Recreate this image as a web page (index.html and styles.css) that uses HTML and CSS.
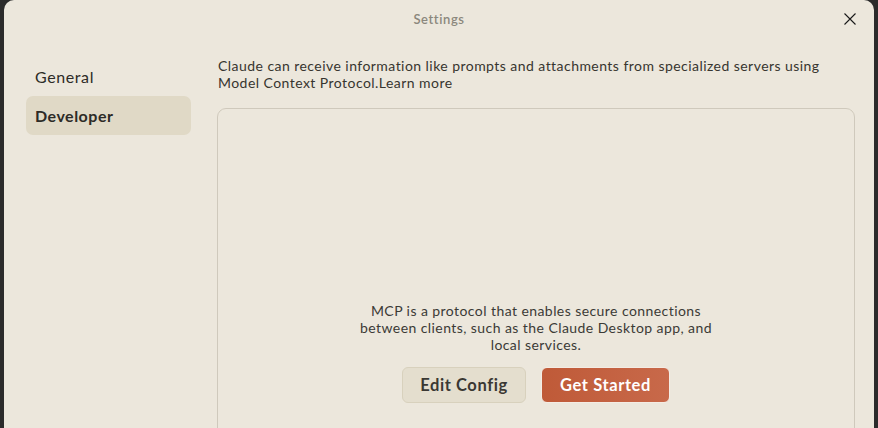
FILE: index.html
```html
<!DOCTYPE html>
<html>
<head>
<meta charset="utf-8">
<link rel="stylesheet" href="styles.css">
</head>
<body>
<div class="window">
  <div class="titlebar">
    <span class="title">Settings</span>
    <button class="close" aria-label="Close">
      <svg width="12" height="12" viewBox="0 0 12 12"><path d="M0.5 0.5 L11.5 11.5 M11.5 0.5 L0.5 11.5" stroke="#1a1a1a" stroke-width="1.1" fill="none"/></svg>
    </button>
  </div>
  <div class="content">
    <nav class="sidebar">
      <div class="nav-item">General</div>
      <div class="nav-item active">Developer</div>
    </nav>
    <main class="main">
      <p class="intro">Claude can receive information like prompts and attachments from specialized servers using Model Context Protocol.Learn more</p>
      <section class="panel">
        <p class="panel-text">MCP is a protocol that enables secure connections between clients, such as the Claude Desktop app, and local services.</p>
        <div class="actions">
          <button class="btn btn-secondary">Edit Config</button>
          <button class="btn btn-primary">Get Started</button>
        </div>
      </section>
    </main>
  </div>
</div>
</body>
</html>
```
FILE: styles.css
```css
* { box-sizing: border-box; }
html, body { margin: 0; padding: 0; height: 100%; overflow: hidden; }
body {
  background: #2b2b2b;
  font-family: "Lato", "Noto Sans", sans-serif;
  color: #2d2b27;
}
.window {
  margin-left: 4px;
  width: 870px;
  height: 428px;
  overflow: hidden;
  background: #ece7dc;
  border-radius: 10px 10px 0 0;
}
.titlebar {
  height: 38px;
  display: flex;
  align-items: center;
  justify-content: center;
  position: relative;
}
.title {
  font-size: 13px;
  font-weight: 600;
  letter-spacing: 0.6px;
  color: #8b877d;
}
.close {
  position: absolute;
  right: 18px;
  top: 13px;
  background: none;
  border: 0;
  padding: 0;
  width: 12px;
  height: 12px;
  display: flex;
}
.content {
  display: flex;
  padding-top: 19px;
}
.sidebar {
  width: 213px;
  padding-left: 22px;
  padding-right: 26px;
  display: flex;
  flex-direction: column;
}
.nav-item {
  height: 39px;
  display: flex;
  align-items: center;
  padding-left: 9px;
  font-size: 16px;
  letter-spacing: 0.6px;
  border-radius: 7px;
  color: #2d2b27;
}
.nav-item.active {
  background: #e0d9c6;
  font-weight: 700;
  letter-spacing: 0.5px;
}
.main {
  flex: 1;
  padding-right: 19px;
}
.intro {
  margin: 0;
  padding-left: 1px;
  font-size: 14px;
  line-height: 17px;
  letter-spacing: 0.45px;
  color: #37352f;
}
.panel {
  margin-top: 17px;
  border: 1px solid #cfc9bc;
  border-radius: 9px;
  height: 400px;
  padding-top: 193px;
  display: flex;
  flex-direction: column;
  align-items: center;
}
.panel-text {
  margin: 0;
  max-width: 360px;
  text-align: center;
  font-size: 14px;
  line-height: 17px;
  letter-spacing: 0.43px;
  color: #3b3a36;
}
.actions {
  display: flex;
  gap: 15px;
  margin-top: 14px;
}
.btn {
  height: 36px;
  font-family: inherit;
  font-size: 16.5px;
  font-weight: 700;
  letter-spacing: 0.6px;
  border-radius: 6px;
  padding: 0;
}
.btn-secondary {
  width: 124px;
  background: #e4dece;
  border: 1px solid #d8d1bd;
  color: #3a3833;
}
.btn-primary {
  width: 129px;
  background: linear-gradient(90deg, #bf5a38, #c8694a);
  border: 1px solid #f4ece4;
  color: #fff;
}
```
